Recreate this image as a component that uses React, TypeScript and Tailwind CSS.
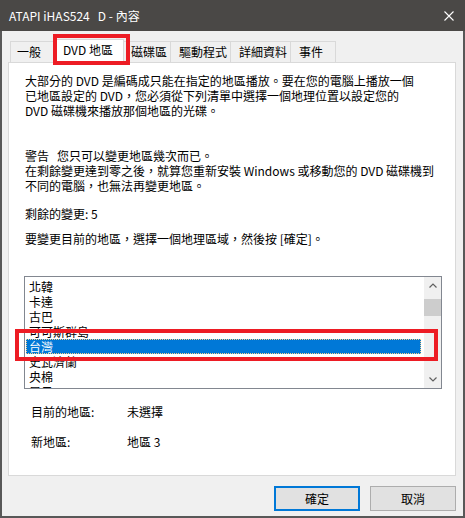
import React from "react";

const FONT = { fontFamily: '"Noto Sans CJK TC", "Noto Sans", sans-serif' };

function Tab({ label, w, pl, last }: { label: string; w: number; pl: number; last?: boolean }) {
  return (
    <div
      className={
        "h-[21px] bg-[#f0f0f0] border-t border-l border-[#d9d9d9] flex items-center text-[12px] text-black whitespace-nowrap " +
        (last ? "border-r" : "")
      }
      style={{ width: w, paddingLeft: pl }}
    >
      {label}
    </div>
  );
}

export default function App() {
  const items = ["北韓", "卡達", "古巴", "可可斯群島", "台灣", "史瓦濟蘭", "央棉", "尼日"];
  return (
    <div className="w-[465px] h-[518px] flex flex-col overflow-hidden relative" style={FONT}>
      {/* title bar */}
      <div className="h-[31px] shrink-0 bg-[#4a4846] flex items-center justify-between pl-[9px] pr-[11px]">
        <span className="text-white text-[12px] whitespace-pre leading-none">ATAPI iHAS524   D - 內容</span>
        <svg width="10" height="10" viewBox="0 0 10 10">
          <path d="M0.5 0.5 L9.5 9.5 M9.5 0.5 L0.5 9.5" stroke="#ffffff" strokeWidth="1.1" />
        </svg>
      </div>

      {/* body */}
      <div className="flex-1 bg-[#f0f0f0] border-x-2 border-b-2 border-[#585858] flex flex-col">
        {/* tabs */}
        <div className="flex items-end h-[23px] mt-[8px] pl-[8px] relative z-10">
          <Tab label="一般" w={45} pl={6} />
          <div className="-mx-[2px] w-[71px] h-[24px] -mb-px bg-white border-t border-x border-[#d9d9d9] flex items-center pl-[9px] pb-[3px] text-[12px] text-black whitespace-nowrap relative z-10">
            DVD 地區
          </div>
          <Tab label="磁碟區" w={48} pl={8} />
          <Tab label="驅動程式" w={60} pl={8} />
          <Tab label="詳細資料" w={60} pl={8} />
          <Tab label="事件" w={46} pl={8} last />
        </div>

        {/* panel */}
        <div className="ml-[6px] w-[448px] h-[414px] bg-white border border-[#d9d9d9] pl-[16px] pt-[10px] text-[12px] leading-[15px] text-black">
          <div className="whitespace-nowrap">
            <div>大部分的 DVD 是編碼成只能在指定的地區播放。要在您的電腦上播放一個</div>
            <div>已地區設定的 DVD，您必須從下列清單中選擇一個地理位置以設定您的</div>
            <div>DVD 磁碟機來播放那個地區的光碟。</div>
          </div>
          <div className="mt-[30px] whitespace-nowrap">
            <div className="whitespace-pre">警告   您只可以變更地區幾次而已。</div>
            <div>在剩餘變更達到零之後，就算您重新安裝 Windows 或移動您的 DVD 磁碟機到</div>
            <div>不同的電腦，也無法再變更地區。</div>
          </div>
          <div className="mt-[13px]">剩餘的變更: 5</div>
          <div className="mt-[10px]">要變更目前的地區，選擇一個地理區域，然後按 [確定]。</div>

          {/* listbox */}
          <div className="mt-[30px] -ml-px w-[418px] h-[113px] border border-[#828790] flex">
            <div className="flex-1 overflow-hidden pt-[2px] pl-px">
              {items.map((it) =>
                it === "台灣" ? (
                  <div
                    key={it}
                    className="h-[15px] w-[395px] bg-[#0078d7] text-white pl-[2px] border border-dotted border-[#f7d08a] flex items-center"
                  >
                    {it}
                  </div>
                ) : (
                  <div key={it} className="h-[15px] pl-[3px] flex items-center whitespace-nowrap">
                    {it}
                  </div>
                )
              )}
            </div>
            <div className="w-[17px] bg-[#f0f0f0] flex flex-col items-center">
              <div className="h-[17px] w-full flex items-center justify-center">
                <svg width="8" height="5" viewBox="0 0 8 5">
                  <path d="M0.5 4.5 L4 1 L7.5 4.5" stroke="#606060" strokeWidth="1.2" fill="none" />
                </svg>
              </div>
              <div className="mt-[5px] h-[17px] w-full bg-[#cdcdcd]" />
              <div className="flex-1" />
              <div className="h-[17px] w-full flex items-center justify-center">
                <svg width="8" height="5" viewBox="0 0 8 5">
                  <path d="M0.5 0.5 L4 4 L7.5 0.5" stroke="#606060" strokeWidth="1.2" fill="none" />
                </svg>
              </div>
            </div>
          </div>

          <div className="mt-[15px] flex pl-[6px]">
            <div className="w-[96px]">目前的地區:</div>
            <div>未選擇</div>
          </div>
          <div className="mt-[15px] flex pl-[6px]">
            <div className="w-[96px]">新地區:</div>
            <div>地區 3</div>
          </div>
        </div>

        {/* buttons */}
        <div className="flex justify-end gap-[10px] mt-[10px] pr-[7px]">
          <div className="w-[86px] h-[25px] bg-[#e1e1e1] border-2 border-[#0078d7] flex items-center justify-center text-[12px] text-black">
            確定
          </div>
          <div className="w-[86px] h-[25px] bg-[#e1e1e1] border border-[#adadad] flex items-center justify-center text-[12px] text-black">
            取消
          </div>
        </div>
      </div>

      {/* red annotation boxes */}
      <div className="absolute left-[53px] top-[34px] w-[77px] h-[31px] border-4 border-[#ed1c24] z-20 pointer-events-none" />
      <div className="absolute left-[15px] top-[329px] w-[423px] h-[32px] border-4 border-[#ed1c24] z-20 pointer-events-none" />
    </div>
  );
}
